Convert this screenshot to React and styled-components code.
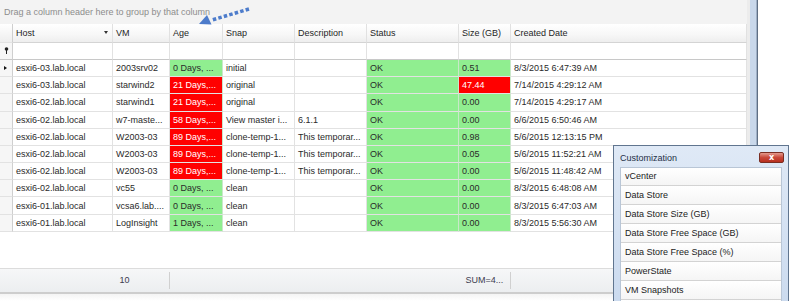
import React from 'react';
import styled, { createGlobalStyle } from 'styled-components';

const COLS = '12.5px 100px 57px 53px 72px 72px 92px 52px 236px';

const GlobalStyle = createGlobalStyle`
  html, body { margin: 0; padding: 0; }
  body {
    width: 790px;
    height: 301px;
    overflow: hidden;
    background: #fff;
    font-family: "Liberation Sans", Arial, sans-serif;
    font-size: 9px;
    color: #262626;
  }
`;

const Screen = styled.div`
  position: relative;
  width: 790px;
  height: 301px;
  display: flex;
  overflow: hidden;
`;

const GridPane = styled.div`
  width: 747px;
  display: flex;
  flex-direction: column;
`;

const Frame = styled.div`
  width: 11px;
  display: flex;
`;

const FrameStrip = styled.div`
  width: ${p => p.$w}px;
  background: ${p => p.$c};
`;

const GroupPanel = styled.div`
  height: 23.5px;
  background: #f3f3f3;
  color: #8d8d8d;
  padding-left: 4px;
  display: flex;
  align-items: center;
  padding-top: 1px;
  box-sizing: border-box;
`;

const Row = styled.div`
  display: grid;
  grid-template-columns: ${COLS};
  height: ${p => p.$h}px;
  flex: none;
`;

const HeadCell = styled.div`
  display: flex;
  align-items: center;
  justify-content: space-between;
  padding: 0 4px 0 3.5px;
  background: linear-gradient(#ffffff, #f7f7f7 60%, #eeeeee);
  border-right: 1px solid #e1e1e1;
  border-bottom: 1px solid #d4d4d4;
  color: #1f1f1f;
  overflow: hidden;
  white-space: nowrap;
`;

const SortArrow = styled.span`
  width: 0;
  height: 0;
  border-left: 2.5px solid transparent;
  border-right: 2.5px solid transparent;
  border-top: 3px solid #333;
`;

const RowHead = styled.div`
  display: flex;
  align-items: center;
  padding-left: 4px;
  background: ${p => (p.$head ? 'linear-gradient(#ffffff, #eeeeee)' : '#f6f6f6')};
  border-right: 1px solid #cfcfcf;
  border-bottom: 1px solid ${p => (p.$strong ? '#c8c8c8' : '#e2e2e2')};
`;

const Pointer = styled.span`
  width: 0;
  height: 0;
  border-top: 2.5px solid transparent;
  border-bottom: 2.5px solid transparent;
  border-left: 3px solid #111;
`;

const Cell = styled.div`
  display: flex;
  align-items: center;
  padding: 0 3.5px;
  overflow: hidden;
  white-space: nowrap;
  background: ${p => (p.$tone === 'g' ? '#90ee90' : p.$tone === 'r' ? '#ff0000' : '#ffffff')};
  color: ${p => (p.$tone === 'r' ? '#ffffff' : '#2a2a2a')};
  border-right: 1px solid ${p => (p.$tone ? '#c9e8c9' : '#e2e2e2')};
  border-bottom: 1px solid ${p => (p.$strong ? '#c8c8c8' : '#e2e2e2')};
`;

const EmptyArea = styled.div`
  flex: 1;
  background: #fff;
`;

const Footer = styled.div`
  display: grid;
  grid-template-columns: ${COLS};
  height: 23.5px;
  flex: none;
  background: linear-gradient(#f6f7f8, #eceef0);
  border-top: 1px solid #dcdcdc;
  box-sizing: border-box;
`;

const FooterCell = styled.div`
  display: flex;
  align-items: center;
  padding-left: 7px;
  color: #3c3c50;
  border-right: ${p => (p.$sep ? '1px solid #d0d0d0' : 'none')};
  margin: 3px 0;
`;

const BottomEdge = styled.div`
  height: 9.5px;
  flex: none;
  border-top: 2px solid #cdcdcd;
  background: linear-gradient(#f4f4f4, #ffffff);
  box-sizing: border-box;
`;

const Hint = styled.svg`
  position: absolute;
  left: 195px;
  top: 3px;
`;

const Dialog = styled.div`
  position: absolute;
  left: 613px;
  top: 145px;
  width: 176px;
  height: 175px;
  box-sizing: border-box;
  border: 1px solid #60758f;
  background: linear-gradient(#dfe9f6, #c9d9ee);
  display: flex;
  flex-direction: column;
`;

const TitleBar = styled.div`
  height: 20.5px;
  flex: none;
  box-sizing: border-box;
  padding: 2.5px 4px 0 6px;
  display: flex;
  align-items: center;
  justify-content: space-between;
  color: #1e2f46;
`;

const CloseButton = styled.div`
  width: 25px;
  height: 11px;
  box-sizing: border-box;
  border: 1px solid #7a2d22;
  border-radius: 2px;
  background: linear-gradient(#e49a8d, #c9483a 50%, #b7301f);
  color: #fff;
  font-family: "DejaVu Sans", sans-serif;
  font-weight: bold;
  font-size: 8px;
  line-height: 9px;
  text-align: center;
`;

const ItemList = styled.div`
  flex: none;
  margin: 0 6px 0 6px;
  border: 1px solid #b9c6d6;
  border-bottom: none;
  display: flex;
  flex-direction: column;
`;

const Item = styled.div`
  height: 18.9px;
  flex: none;
  box-sizing: border-box;
  padding-left: 4px;
  display: flex;
  align-items: center;
  background: linear-gradient(#ffffff, #f5f5f5);
  border-bottom: 1px solid #d3d3d3;
  color: #1b1b1b;
`;

const headers = ['Host', 'VM', 'Age', 'Snap', 'Description', 'Status', 'Size (GB)', 'Created Date'];

const rows = [
  ['esxi6-03.lab.local', '2003srv02', '0 Days, ...', 'g', 'initial', '', '0.51', 'g', '8/3/2015 6:47:39 AM'],
  ['esxi6-03.lab.local', 'starwind2', '21 Days,...', 'r', 'original', '', '47.44', 'r', '7/14/2015 4:29:12 AM'],
  ['esxi6-02.lab.local', 'starwind1', '21 Days,...', 'r', 'original', '', '0.00', 'g', '7/14/2015 4:29:17 AM'],
  ['esxi6-02.lab.local', 'w7-maste...', '58 Days,...', 'r', 'View master i...', '6.1.1', '0.00', 'g', '6/6/2015 6:50:46 AM'],
  ['esxi6-02.lab.local', 'W2003-03', '89 Days,...', 'r', 'clone-temp-1...', 'This temporar...', '0.98', 'g', '5/6/2015 12:13:15 PM'],
  ['esxi6-02.lab.local', 'W2003-03', '89 Days,...', 'r', 'clone-temp-1...', 'This temporar...', '0.05', 'g', '5/6/2015 11:52:21 AM'],
  ['esxi6-02.lab.local', 'W2003-03', '89 Days,...', 'r', 'clone-temp-1...', 'This temporar...', '0.00', 'g', '5/6/2015 11:48:42 AM'],
  ['esxi6-02.lab.local', 'vc55', '0 Days, ...', 'g', 'clean', '', '0.00', 'g', '8/3/2015 6:48:08 AM'],
  ['esxi6-01.lab.local', 'vcsa6.lab....', '0 Days, ...', 'g', 'clean', '', '0.00', 'g', '8/3/2015 6:47:03 AM'],
  ['esxi6-01.lab.local', 'LogInsight', '1 Days, ...', 'g', 'clean', '', '0.00', 'g', '8/3/2015 5:56:30 AM'],
];

const options = [
  'vCenter',
  'Data Store',
  'Data Store Size (GB)',
  'Data Store Free Space (GB)',
  'Data Store Free Space (%)',
  'PowerState',
  'VM Snapshots',
  '',
];

const PinIcon = () => (
  <svg width="5" height="7" viewBox="0 0 5 7">
    <circle cx="2.5" cy="2" r="1.8" fill="#222" />
    <rect x="2" y="3" width="1" height="4" fill="#222" />
  </svg>
);

export default function App() {
  return (
    <Screen>
      <GlobalStyle />
      <GridPane>
        <GroupPanel>Drag a column header here to group by that column</GroupPanel>

        <Row $h={19.2}>
          <RowHead $head />
          {headers.map((h, i) => (
            <HeadCell key={h}>
              {h}
              {i === 0 && <SortArrow />}
            </HeadCell>
          ))}
        </Row>

        <Row $h={17.3}>
          <RowHead $strong><PinIcon /></RowHead>
          {headers.map(h => <Cell key={h} $strong />)}
        </Row>

        {rows.map((r, i) => (
          <Row $h={17.2} key={i}>
            <RowHead>{i === 0 && <Pointer />}</RowHead>
            <Cell>{r[0]}</Cell>
            <Cell>{r[1]}</Cell>
            <Cell $tone={r[3]}>{r[2]}</Cell>
            <Cell>{r[4]}</Cell>
            <Cell>{r[5]}</Cell>
            <Cell $tone="g">OK</Cell>
            <Cell $tone={r[7]}>{r[6]}</Cell>
            <Cell>{r[8]}</Cell>
          </Row>
        ))}

        <EmptyArea />

        <Footer>
          <FooterCell />
          <FooterCell />
          <FooterCell $sep>10</FooterCell>
          <FooterCell />
          <FooterCell />
          <FooterCell />
          <FooterCell />
          <FooterCell $sep>SUM=4...</FooterCell>
          <FooterCell />
        </Footer>
        <BottomEdge />
      </GridPane>

      <Frame>
        <FrameStrip $w={3} $c="#ececec" />
        <FrameStrip $w={6} $c="#c9d8eb" />
        <FrameStrip $w={1} $c="#9fb0c6" />
        <FrameStrip $w={1} $c="#5f6f84" />
      </Frame>

      <Hint width="60" height="26" viewBox="0 0 60 26">
        <line x1="54" y1="6" x2="17" y2="17" stroke="#4d7ccb" strokeWidth="3.5" strokeDasharray="3.5 2.2" />
        <polygon points="4,21 12,12 16.5,21.5" fill="#4d7ccb" />
      </Hint>

      <Dialog>
        <TitleBar>
          <span>Customization</span>
          <CloseButton>x</CloseButton>
        </TitleBar>
        <ItemList>
          {options.map((o, i) => (
            <Item key={i}>{o}</Item>
          ))}
        </ItemList>
      </Dialog>
    </Screen>
  );
}
